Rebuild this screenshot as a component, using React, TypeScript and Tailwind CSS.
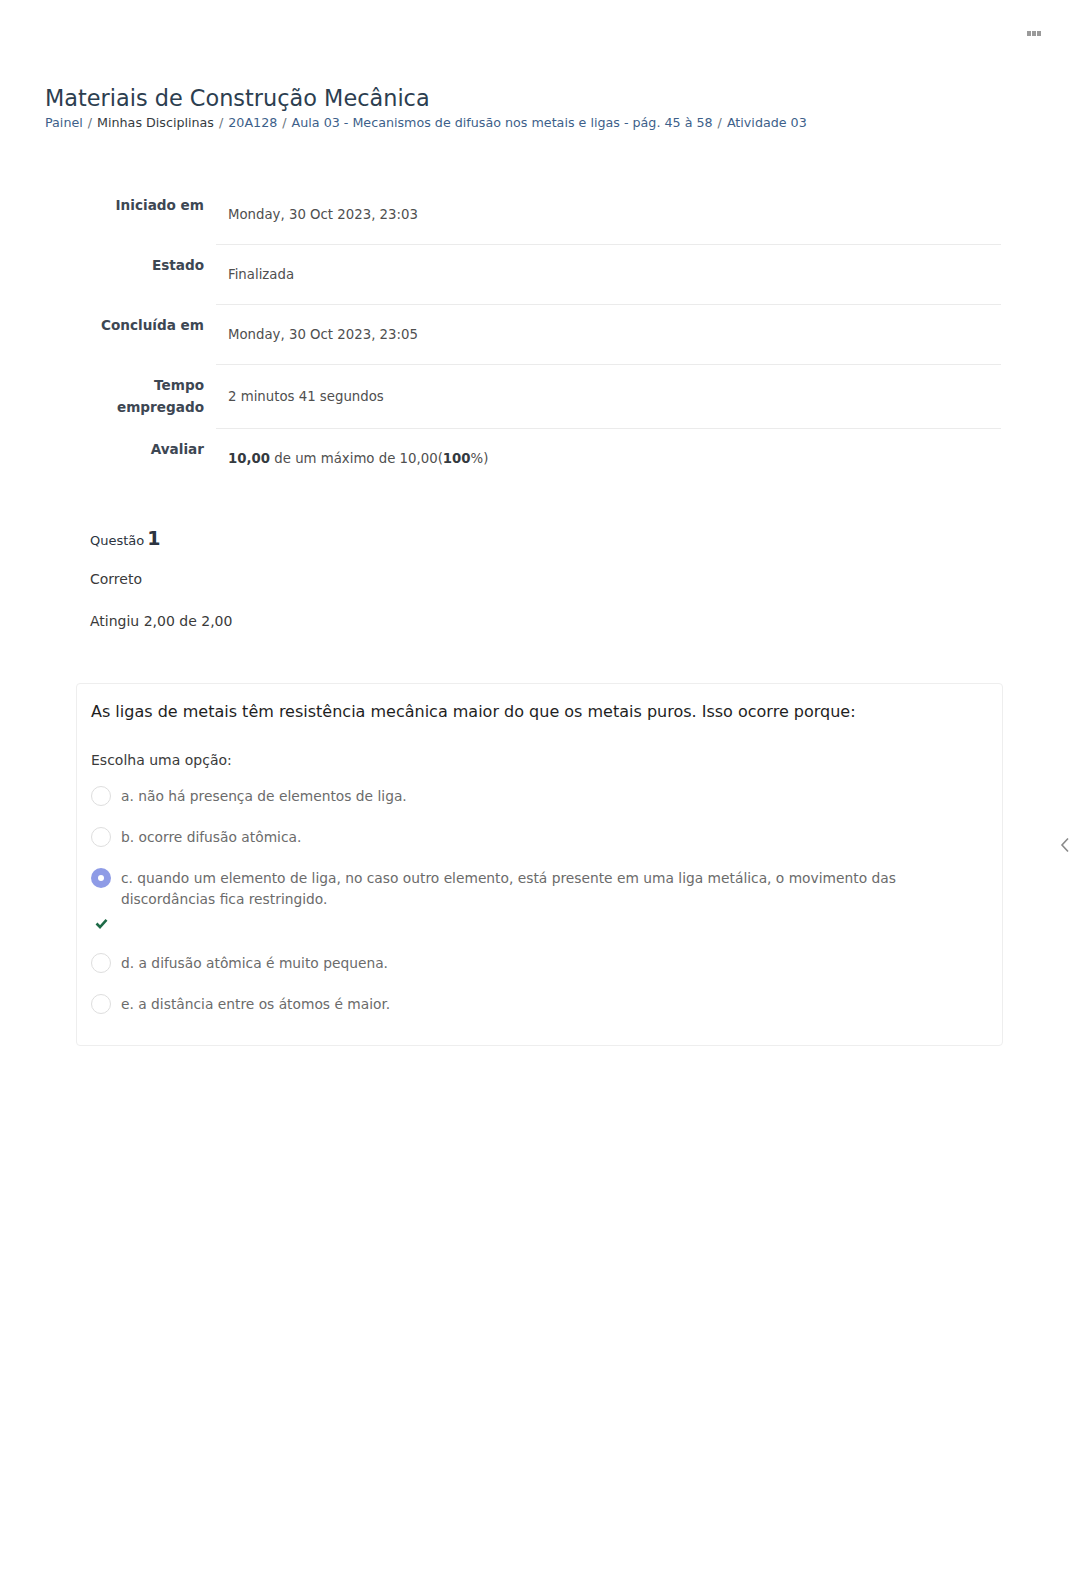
const font = { fontFamily: '"DejaVu Sans", "Noto Sans", sans-serif' };

type Row = { label: string[]; value: React.ReactNode };

const rows: Row[] = [
  { label: ["Iniciado em"], value: "Monday, 30 Oct 2023, 23:03" },
  { label: ["Estado"], value: "Finalizada" },
  { label: ["Concluída em"], value: "Monday, 30 Oct 2023, 23:05" },
  { label: ["Tempo", "empregado"], value: "2 minutos 41 segundos" },
  {
    label: ["Avaliar"],
    value: (
      <>
        <b className="font-bold text-[#343a40]">10,00</b> de um máximo de 10,00(
        <b className="font-bold text-[#343a40]">100</b>%)
      </>
    ),
  },
];

const options = [
  { key: "a", text: "a. não há presença de elementos de liga." },
  { key: "b", text: "b. ocorre difusão atômica." },
  {
    key: "c",
    text: "c. quando um elemento de liga, no caso outro elemento, está presente em uma liga metálica, o movimento das discordâncias fica restringido.",
    checked: true,
  },
  { key: "d", text: "d. a difusão atômica é muito pequena." },
  { key: "e", text: "e. a distância entre os átomos é maior." },
];

function Radio({ checked }: { checked?: boolean }) {
  if (checked)
    return (
      <span className="flex h-[20px] w-[20px] shrink-0 items-center justify-center rounded-full bg-[#8e9be6]">
        <span className="h-[6px] w-[6px] rounded-full bg-white" />
      </span>
    );
  return <span className="h-[20px] w-[20px] shrink-0 rounded-full border border-[#dedede] bg-white" />;
}

export default function App() {
  return (
    <div className="relative min-h-[1572px] w-full bg-white text-[#4a4a4a]" style={font}>
      {/* menu dots */}
      <div className="absolute right-[38px] top-[31px] flex gap-[1px]">
        <span className="h-[5px] w-[4px] bg-[#9a9a9a]" />
        <span className="h-[5px] w-[4px] bg-[#9a9a9a]" />
        <span className="h-[5px] w-[4px] bg-[#9a9a9a]" />
      </div>
      {/* drawer toggle */}
      <svg className="absolute right-[9px] top-[837px]" width="10" height="16" viewBox="0 0 10 16">
        <path d="M8 1.5 L2 8 L8 14.5" fill="none" stroke="#8a8a8a" strokeWidth="1.6" />
      </svg>

      <div className="px-[45px] pt-[84px]">
        <h1 className="text-[22.4px] leading-[28px] text-[#2c3e50]">Materiais de Construção Mecânica</h1>
        <nav className="mt-[2px] flex flex-wrap gap-x-[5px] text-[12.7px] leading-[18px] text-[#3d5f8a]">
          <span>Painel</span>
          <span className="text-[#6a737b]">/</span>
          <span className="text-[#343a40]">Minhas Disciplinas</span>
          <span className="text-[#6a737b]">/</span>
          <span>20A128</span>
          <span className="text-[#6a737b]">/</span>
          <span>Aula 03 - Mecanismos de difusão nos metais e ligas - pág. 45 à 58</span>
          <span className="text-[#6a737b]">/</span>
          <span>Atividade 03</span>
        </nav>

        <div className="ml-[45px] mr-[33px] mt-[52px] text-[14px]">
          {rows.map((r, i) => (
            <div key={i} className="flex">
              <div className="w-[126px] shrink-0 py-[10px] pr-[12px] text-right text-[13.6px] font-bold leading-[22px] text-[#3d4753]">
                {r.label.map((l) => (
                  <div key={l}>{l}</div>
                ))}
              </div>
              <div
                className={
                  "flex min-h-[60px] flex-1 items-center pl-[12px] pt-[1px] text-[13.3px] leading-[20px] text-[#4f4f4f] " +
                  (i > 0 ? "border-t border-[#ebebeb]" : "")
                }
              >
                <span>{r.value}</span>
              </div>
            </div>
          ))}
        </div>

        <div className="ml-[45px] mt-[36px]">
          <div className="flex items-baseline gap-[3px] text-[#2c3440]">
            <span className="text-[13px]">Questão</span>
            <span className="text-[19px] font-bold">1</span>
          </div>
          <div className="mt-[16px] text-[14px] text-[#3a3a3a]">Correto</div>
          <div className="mt-[21px] text-[14px] text-[#3a3a3a]">Atingiu 2,00 de 2,00</div>
        </div>

        <div className="ml-[31px] mr-[31px] mt-[51px] rounded-[4px] border border-[#eeeeee] px-[14px] pb-[20px] pt-[16px]">
          <p className="text-[16px] leading-[24px] text-[#1f1f1f]">
            As ligas de metais têm resistência mecânica maior do que os metais puros. Isso ocorre porque:
          </p>
          <p className="mt-[26px] text-[14px] leading-[20px] text-[#3a3a3a]">Escolha uma opção:</p>
          <div className="mt-[6px] flex flex-col">
            {options.map((o) => (
              <div key={o.key} className="py-[10px]">
                <div className="flex items-start gap-[10px]">
                  <Radio checked={o.checked} />
                  <span className="text-[13.8px] leading-[21px] text-[#6b6b6b]">{o.text}</span>
                </div>
                {o.checked && (
                  <svg className="mb-[4px] ml-[4px] mt-[8px] block" width="13" height="11" viewBox="0 0 13 11">
                    <path d="M1.5 5.5 L5 9 L11.5 1.8" fill="none" stroke="#1e6b47" strokeWidth="2.6" />
                  </svg>
                )}
              </div>
            ))}
          </div>
        </div>
      </div>
    </div>
  );
}
